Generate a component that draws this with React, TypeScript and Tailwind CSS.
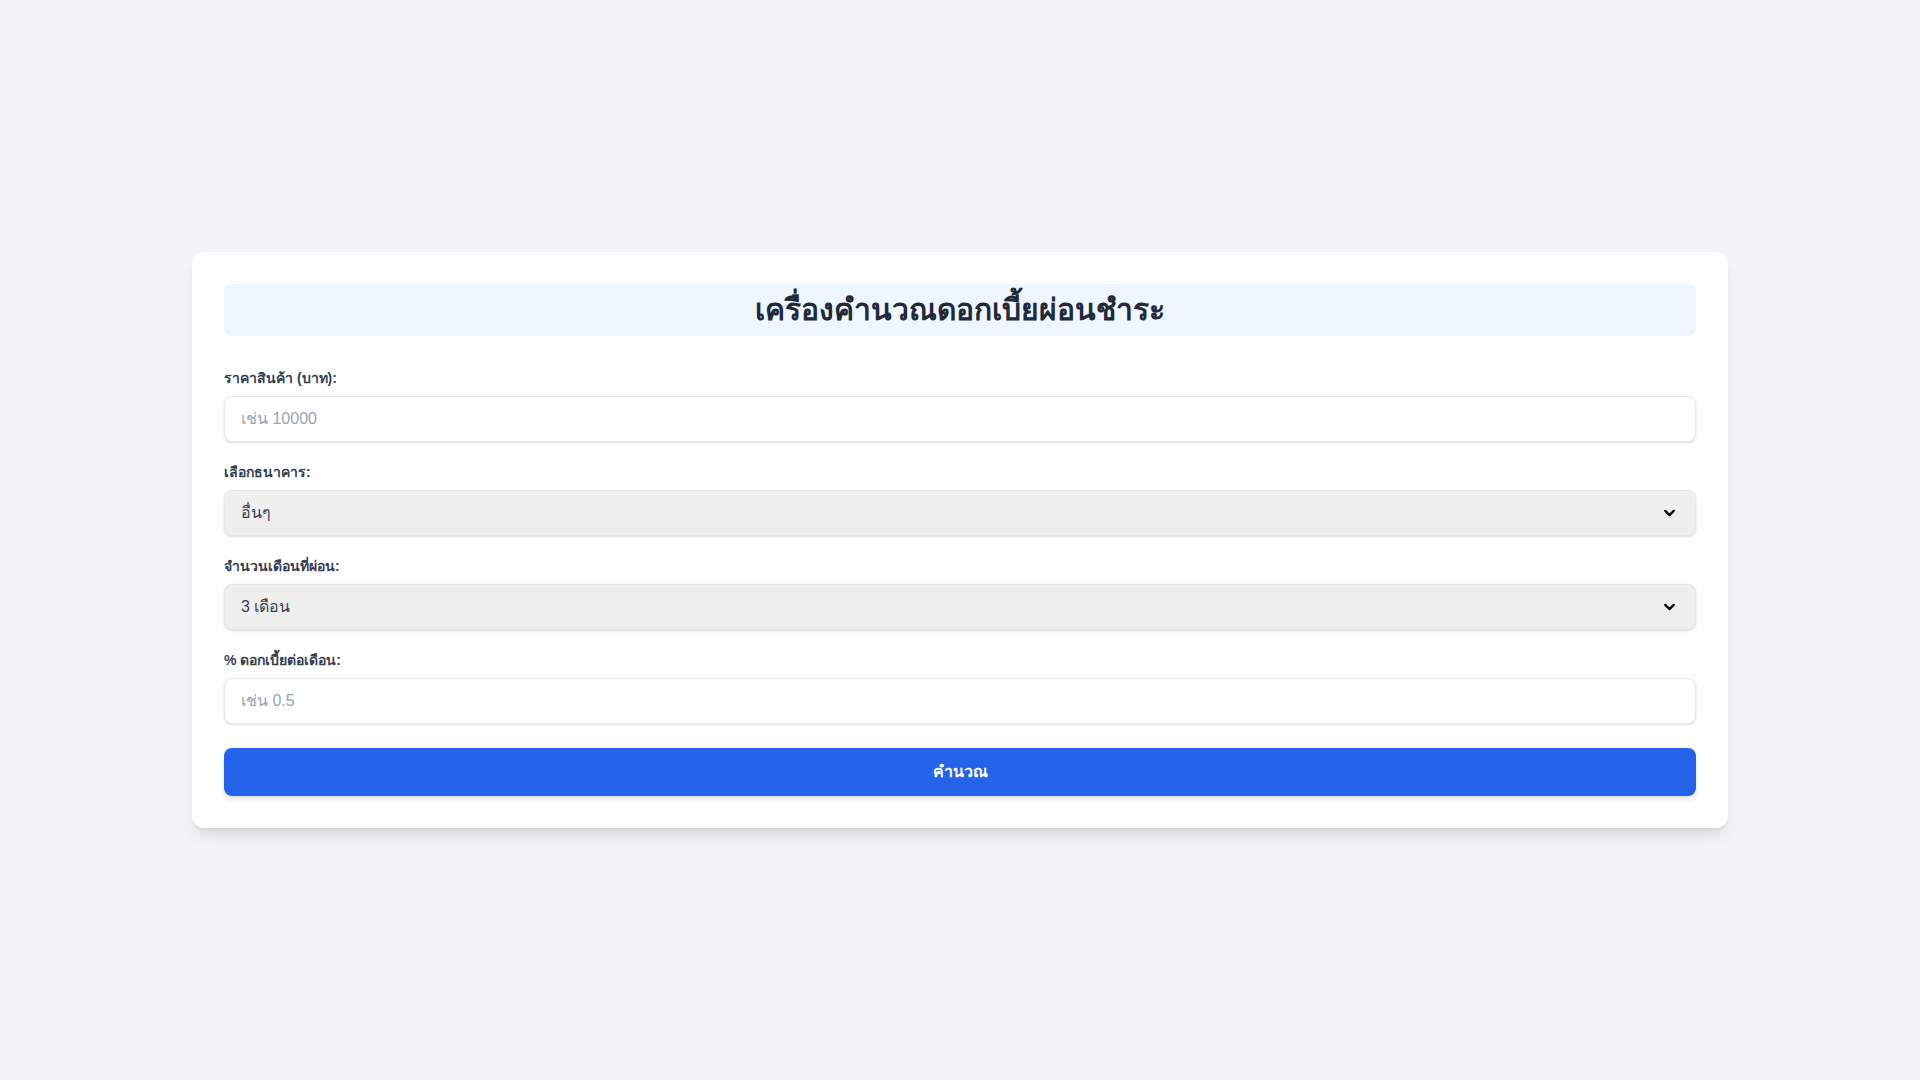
import { ChevronDown } from "lucide-react";

const font = {
  fontFamily: '"Liberation Sans", Arial, "Noto Sans", sans-serif',
};

function Label({ children }: { children: string }) {
  return (
    <label className="mb-2 block text-sm font-semibold leading-5 text-[#374151]">
      {children}
    </label>
  );
}

function SelectBox({ value, options }: { value: string; options: string[] }) {
  return (
    <div className="relative">
      <select
        defaultValue={value}
        className="block w-full appearance-none rounded-lg border border-[#e5e7eb] bg-[#efefef] px-4 py-2.5 text-base leading-6 text-[#374151] shadow-sm outline-none"
      >
        {options.map((o) => (
          <option key={o} value={o}>
            {o}
          </option>
        ))}
      </select>
      <ChevronDown
        className="pointer-events-none absolute right-[18px] top-1/2 h-[17px] w-[17px] -translate-y-1/2 text-black"
        strokeWidth={3.2}
      />
    </div>
  );
}

export default function App() {
  return (
    <div className="flex min-h-screen items-center justify-center bg-[#f3f4f6]" style={font}>
      <div className="container mx-auto rounded-xl bg-white p-8 shadow-lg">
        <h1 className="mb-8 rounded-lg bg-[#eff6ff] py-2 text-center text-3xl font-bold leading-9 text-[#1f2937]">
          เครื่องคำนวณดอกเบี้ยผ่อนชำระ
        </h1>

        <div className="mb-5">
          <Label>ราคาสินค้า (บาท):</Label>
          <input
            type="number"
            placeholder="เช่น 10000"
            className="block w-full rounded-lg border border-[#e5e7eb] bg-white px-4 py-2.5 text-base leading-6 text-[#374151] shadow-sm outline-none placeholder:text-[#9ca3af]"
          />
        </div>

        <div className="mb-5">
          <Label>เลือกธนาคาร:</Label>
          <SelectBox value="อื่นๆ" options={["อื่นๆ", "กสิกรไทย", "ไทยพาณิชย์", "กรุงเทพ"]} />
        </div>

        <div className="mb-5">
          <Label>จำนวนเดือนที่ผ่อน:</Label>
          <SelectBox value="3 เดือน" options={["3 เดือน", "6 เดือน", "10 เดือน", "12 เดือน"]} />
        </div>

        <div className="mb-6">
          <Label>% ดอกเบี้ยต่อเดือน:</Label>
          <input
            type="number"
            placeholder="เช่น 0.5"
            className="block w-full rounded-lg border border-[#e5e7eb] bg-white px-4 py-2.5 text-base leading-6 text-[#374151] shadow-sm outline-none placeholder:text-[#9ca3af]"
          />
        </div>

        <button className="block w-full rounded-lg bg-[#2563eb] py-3 text-base font-semibold leading-6 text-white shadow-md">
          คำนวณ
        </button>
      </div>
    </div>
  );
}
